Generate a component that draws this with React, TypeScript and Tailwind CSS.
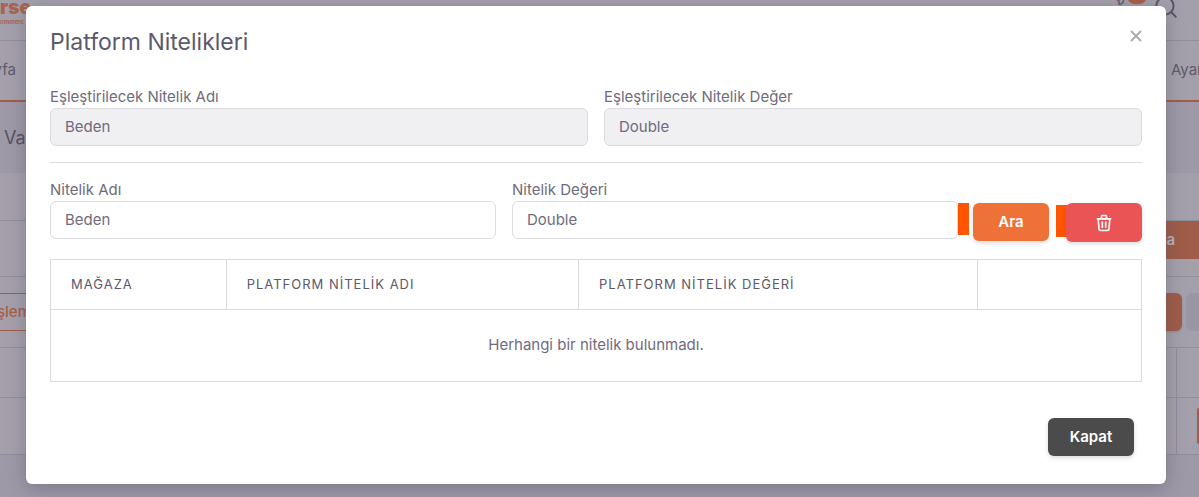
import { Search } from "lucide-react";
import type { ReactNode } from "react";

function Field({ id, label, value, disabled = false }: { id: string; label: string; value: string; disabled?: boolean }) {
  return (
    <div className="flex min-w-0 flex-1 flex-col">
      <label htmlFor={id} className="text-[15px] leading-[22px]">{label}</label>
      <input
        id={id}
        type="text"
        defaultValue={value}
        disabled={disabled}
        className="h-[38px] w-full rounded-md border border-[#dbdade] bg-white px-3.5 pb-0.5 text-[15px] text-[#6f6b7d] outline-none disabled:bg-[#f0eff2]"
      />
    </div>
  );
}

function HeadCell({ children }: { children?: ReactNode }) {
  return (
    <th scope="col" className="h-[50px] border border-[#dbdade] px-5 text-left text-[13px] font-normal tracking-[1px] text-[#5d596c]">
      {children}
    </th>
  );
}

function TrashIcon() {
  return (
    <svg aria-hidden="true" viewBox="0 0 24 24" className="size-5" fill="none" stroke="currentColor" strokeWidth="2" strokeLinecap="round" strokeLinejoin="round">
      <path d="M4 7h16M10 11v6M14 11v6M5 7l1 12a2 2 0 0 0 2 2h8a2 2 0 0 0 2-2l1-12M9 7V4a1 1 0 0 1 1-1h4a1 1 0 0 1 1 1v3" />
    </svg>
  );
}

function Backdrop() {
  return (
    <div aria-hidden="true" className="min-h-screen overflow-hidden bg-[#9d99a7] text-[15px] text-[#5f5a6c]">
      <div className="flex h-[41px] items-start justify-between overflow-hidden border-b border-[#918d9b] bg-[#a4a0ab]">
        <div className="flex flex-col items-start whitespace-nowrap text-[#ab6350]">
          <span className="h-[18px] text-[19px] leading-4 font-black">rse</span>
          <span className="text-[6px] leading-2 font-bold">ommerc</span>
        </div>
        <div className="flex items-start pr-5">
          <span className="-mt-2 mr-0.5 text-[15px] leading-4">₺</span>
          <span className="-mt-3 mr-1.5 h-4 w-5 rounded-full bg-[#ab5f47]" />
          <Search className="-mt-1.5 size-[26px] text-[#5a5566]" strokeWidth={1.8} />
        </div>
      </div>
      <div className="flex h-[61px] items-center justify-between border-b-2 border-[#a55b45] bg-[#a4a0ab]">
        <div className="flex w-4 justify-end whitespace-nowrap">yfa</div>
        <div className="w-7 whitespace-nowrap">Ayar</div>
      </div>
      <div className="flex h-[71px] items-center pl-1 text-lg text-[#565164]">Va</div>
      <div className="border-b border-[#918d9b] bg-[#a4a0ab]">
        <div className="h-12 border-b border-[#918d9b]" />
        <div className="flex h-[56px] justify-end border-b border-[#918d9b]">
          <div className="flex h-[38px] w-[60px] items-center justify-end bg-[#9f5c48] pr-6 font-semibold text-[#b9b3bd]">a</div>
        </div>
        <div className="flex h-[71px] items-center justify-between border-b border-[#918d9b]">
          <div className="flex h-[38px] w-[31px] items-center justify-end border-y border-[#a55b45] font-medium text-[#a85c45]">şlem</div>
          <div className="flex gap-1">
            <div className="h-[38px] w-12 rounded-r-md bg-[#9f5c48] shadow" />
            <div className="h-[38px] w-[13px] rounded-l-md bg-[#9a96a4]" />
          </div>
        </div>
        <div className="flex h-[50px] justify-end border-b border-[#918d9b]">
          <div className="w-[23px] border-l border-[#918d9b]" />
        </div>
        <div className="flex h-14 justify-end">
          <div className="flex w-[23px] items-center justify-end border-l border-[#918d9b]">
            <div className="h-9 w-0.5 rounded-l bg-[#9f5c48]" />
          </div>
        </div>
      </div>
    </div>
  );
}

export default function App() {
  return (
    <div className="relative min-h-screen overflow-hidden font-['Inter','Liberation_Sans',sans-serif]">
      <Backdrop />
      <div className="absolute inset-0 pt-1.5 pr-[7px]">
        <section
          role="dialog"
          aria-modal="true"
          aria-labelledby="dialog-title"
          className="mx-auto w-full max-w-[1140px] rounded-md bg-white px-6 pb-7 text-[#6f6b7d] shadow-[0_4px_18px_rgba(75,70,92,0.4)]"
        >
          <header className="flex items-start justify-between pt-5 pb-7">
            <h1 id="dialog-title" className="text-[23px] leading-8 text-[#5d596c]">Platform Nitelikleri</h1>
            <button type="button" aria-label="Kapat" className="mt-1 text-[#adabb5]">
              <svg aria-hidden="true" viewBox="0 0 12 12" className="size-3" fill="none" stroke="currentColor" strokeWidth="2" strokeLinecap="round">
                <path d="M1.5 1.5l9 9M10.5 1.5l-9 9" />
              </svg>
            </button>
          </header>

          <div className="flex gap-4">
            <Field id="source-name" label="Eşleştirilecek Nitelik Adı" value="Beden" disabled />
            <Field id="source-value" label="Eşleştirilecek Nitelik Değer" value="Double" disabled />
          </div>
          <hr className="my-4 border-[#dbdade]" />

          <form className="flex items-start" onSubmit={(event) => event.preventDefault()}>
            <div className="flex flex-1 gap-4">
              <Field id="name" label="Nitelik Adı" value="Beden" />
              <Field id="value" label="Nitelik Değeri" value="Double" />
            </div>
            <div className="mt-6 flex items-start">
              <span className="h-8 w-[11px] bg-[#ff5500]" />
              <button type="submit" className="ml-1 h-[38px] w-[76px] rounded-md bg-[#ee7238] text-[15px] font-semibold text-white shadow-[0_2px_4px_rgba(75,70,92,0.2)]">Ara</button>
              <div className="relative ml-[17px]">
                <span className="absolute top-0.5 -left-2.5 h-8 w-4 bg-[#ff5500]" />
                <button type="button" aria-label="Sil" className="relative flex h-[39px] w-[76px] items-center justify-center rounded-md bg-[#ea5455] text-white shadow-[0_2px_4px_rgba(75,70,92,0.2)]">
                  <TrashIcon />
                </button>
              </div>
            </div>
          </form>

          <table className="mt-[17px] w-full table-fixed border-collapse border border-[#dbdade]">
            <colgroup>
              <col className="w-[16.1%]" />
              <col className="w-[32.3%]" />
              <col className="w-[36.6%]" />
              <col />
            </colgroup>
            <thead>
              <tr>
                <HeadCell>MAĞAZA</HeadCell>
                <HeadCell>PLATFORM NİTELİK ADI</HeadCell>
                <HeadCell>PLATFORM NİTELİK DEĞERİ</HeadCell>
                <HeadCell />
              </tr>
            </thead>
            <tbody>
              <tr>
                <td colSpan={4} className="h-[72px] text-center text-[15px]">Herhangi bir nitelik bulunmadı.</td>
              </tr>
            </tbody>
          </table>

          <footer className="mt-9 flex justify-end pr-2">
            <button type="button" className="h-[38px] w-[86px] rounded-md bg-[#4b4b4b] text-[15px] font-semibold text-white shadow-[0_2px_4px_rgba(75,70,92,0.2)]">Kapat</button>
          </footer>
        </section>
      </div>
    </div>
  );
}
